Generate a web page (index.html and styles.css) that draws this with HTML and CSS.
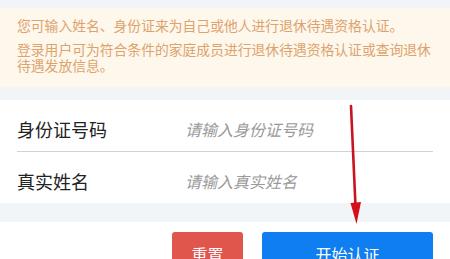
FILE: index.html
```html
<!DOCTYPE html>
<html lang="zh-CN">
<head>
  <meta charset="UTF-8" />
  <meta name="viewport" content="width=device-width, initial-scale=1.0"/>
  <title>退休待遇资格认证</title>
  <link rel="stylesheet" href="styles.css">
</head>
<body>

  <div class="page">
    <div class="notice">
      <p class="tip-first">您可输入姓名、身份证来为自己或他人进行退休待遇资格认证。</p>
      <p>登录用户可为符合条件的家庭成员进行退休待遇资格认证或查询退休待遇发放信息。</p>
    </div>

    <div class="form">
      <div class="row">
        <label class="row-label">身份证号码</label>
        <input class="row-input" type="text" placeholder="请输入身份证号码">
      </div>
      <div class="row">
        <label class="row-label">真实姓名</label>
        <input class="row-input" type="text" placeholder="请输入真实姓名">
      </div>
    </div>

    <div class="actions">
      <button class="btn btn-reset">重置</button>
      <button class="btn btn-start">开始认证</button>
    </div>

    <!-- annotation arrow -->
    <svg class="arrow" width="450" height="259" viewBox="0 0 450 259">
      <line x1="351" y1="106" x2="355.5" y2="206" stroke="#c8141f" stroke-width="2.6" stroke-linecap="round"/>
      <polygon points="350.5,203 361,202 356.5,224" fill="#d40f1a"/>
    </svg>
  </div>

</body>
</html>
```

FILE: styles.css
```css
body {
  margin: 0;
  background-color: #f1f5f8;
  font-family: "Noto Sans CJK SC", "Noto Sans", sans-serif;
}

.page {
  position: relative;
  width: 450px;
  height: 259px;
  overflow: hidden;
}

.notice {
  margin-top: 8px;
  padding: 9px 10px 14px 17px;
  background-color: #fef7ec;
  color: #dda36c;
  font-size: 13.8px;
}

.notice p {
  margin: 0;
  line-height: 16px;
}

.notice .tip-first {
  line-height: 17px;
  margin-bottom: 7px;
}

.form {
  margin-top: 13px;
  padding: 0 17px;
  background-color: #fff;
}

.row {
  display: flex;
  align-items: center;
  height: 44px;
  padding-top: 7px;
}

.row:first-child {
  border-bottom: 1px solid #d2d2d2;
}

.row-label {
  width: 168px;
  font-size: 18px;
  color: #222;
}

.row-input {
  flex: 1;
  border: none;
  outline: none;
  padding: 0;
  font-family: inherit;
  font-size: 16px;
  font-style: italic;
  background: transparent;
}

.row-input::placeholder {
  color: #9a9a9a;
}

.actions {
  display: flex;
  justify-content: flex-end;
  gap: 19px;
  margin-top: 19px;
  padding: 10px 17px 0 0;
  height: 60px;
  background-color: #fff;
}

.btn {
  height: 44px;
  border: none;
  border-radius: 3px;
  color: #fff;
  font-family: inherit;
  font-size: 16px;
  cursor: pointer;
}

.btn-reset {
  width: 71px;
  background-color: #e0564d;
}

.btn-start {
  width: 171px;
  background-color: #0f7ef0;
}

.arrow {
  position: absolute;
  left: 0;
  top: 0;
  pointer-events: none;
}
```
